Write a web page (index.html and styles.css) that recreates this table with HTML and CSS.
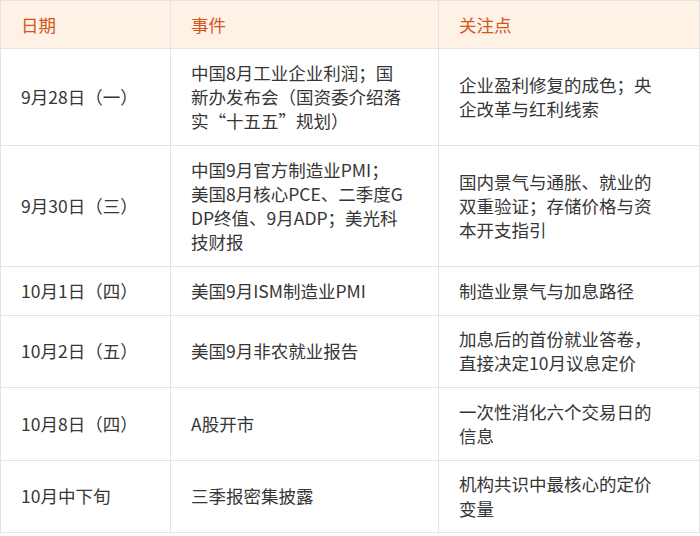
FILE: index.html
```html
<!DOCTYPE html>
<html lang="zh-CN">
<head>
<meta charset="utf-8">
<title>事件日历</title>
<link rel="stylesheet" href="styles.css">
</head>
<body>
<table class="cal">
  <colgroup>
    <col class="c-date">
    <col class="c-event">
    <col class="c-focus">
  </colgroup>
  <thead>
    <tr><th>日期</th><th>事件</th><th>关注点</th></tr>
  </thead>
  <tbody>
    <tr>
      <td>9月28日（一）</td>
      <td>中国8月工业企业利润；国新办发布会（国资委介绍落实“十五五”规划）</td>
      <td>企业盈利修复的成色；央企改革与红利线索</td>
    </tr>
    <tr>
      <td>9月30日（三）</td>
      <td>中国9月官方制造业PMI；美国8月核心PCE、二季度GDP终值、9月ADP；美光科技财报</td>
      <td>国内景气与通胀、就业的双重验证；存储价格与资本开支指引</td>
    </tr>
    <tr>
      <td>10月1日（四）</td>
      <td>美国9月ISM制造业PMI</td>
      <td>制造业景气与加息路径</td>
    </tr>
    <tr>
      <td>10月2日（五）</td>
      <td>美国9月非农就业报告</td>
      <td>加息后的首份就业答卷，直接决定10月议息定价</td>
    </tr>
    <tr>
      <td>10月8日（四）</td>
      <td>A股开市</td>
      <td>一次性消化六个交易日的信息</td>
    </tr>
    <tr>
      <td>10月中下旬</td>
      <td>三季报密集披露</td>
      <td>机构共识中最核心的定价变量</td>
    </tr>
  </tbody>
</table>
</body>
</html>
```
FILE: styles.css
```css
html, body {
  margin: 0;
  padding: 0;
  background: #ffffff;
}
.cal {
  border-collapse: collapse;
  table-layout: fixed;
  width: 699px;
  font-family: "Noto Sans CJK SC", "Noto Sans", sans-serif;
  font-size: 17.5px;
  line-height: 24.2px;
  color: #363636;
}
.c-date { width: 170px; }
.c-event { width: 268px; }
.c-focus { width: 261px; }
.cal th,
.cal td {
  border: 1px solid #e3e3e3;
  padding: 11.6px 33px 11.6px 20px;
  text-align: left;
  vertical-align: middle;
  word-break: break-all;
}
.cal th {
  background: #fef2e7;
  color: #d4551c;
  font-weight: normal;
}
```
